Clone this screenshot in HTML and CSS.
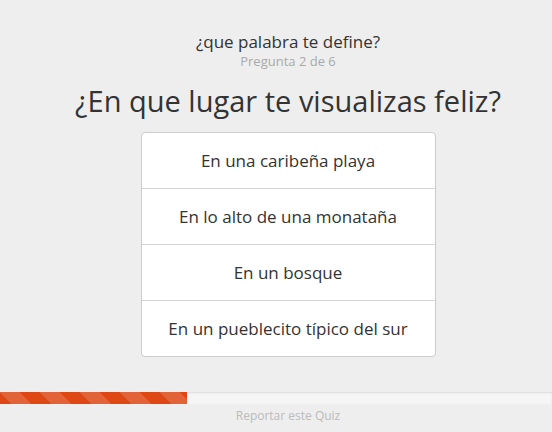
FILE: index.html
```html
<!DOCTYPE html>
<html lang="es">
<head>
<meta charset="utf-8">
<title>Quiz</title>
<link rel="stylesheet" href="styles.css">
</head>
<body>
<div class="page">
  <main class="quiz">
    <header class="quiz-head">
      <div class="quiz-title">¿que palabra te define?</div>
      <div class="quiz-step">Pregunta 2 de 6</div>
    </header>
    <h1 class="question">¿En que lugar te visualizas feliz?</h1>
    <ul class="answers">
      <li class="answer">En una caribeña playa</li>
      <li class="answer">En lo alto de una monataña</li>
      <li class="answer">En un bosque</li>
      <li class="answer">En un pueblecito típico del sur</li>
    </ul>
  </main>
  <footer class="quiz-foot">
    <div class="progress"><div class="progress-bar" style="width: 33.9%"></div></div>
    <div class="report">Reportar este Quiz</div>
  </footer>
</div>
</body>
</html>
```
FILE: styles.css
```css
html, body {
  margin: 0;
  padding: 0;
  height: 100%;
}
body {
  background: #eeeeee;
  font-family: "Open Sans", "Noto Sans", sans-serif;
  color: #333333;
}
.page {
  height: 100%;
  display: flex;
  flex-direction: column;
}
.quiz {
  flex: 1;
  display: flex;
  flex-direction: column;
  align-items: center;
  padding-top: 31px;
  padding-left: 24px;
}
.quiz-head {
  text-align: center;
}
.quiz-title {
  font-size: 17px;
  line-height: 22px;
  color: #333;
}
.quiz-step {
  font-size: 13px;
  line-height: 16px;
  color: #aaaaaa;
}
.question {
  margin: 13px 0 0;
  font-size: 29px;
  line-height: 38px;
  font-weight: normal;
  color: #333;
}
.answers {
  list-style: none;
  margin: 12px 0 0;
  padding: 0;
  width: 293px;
  background: #fff;
  border: 1px solid #cccccc;
  border-radius: 4px;
}
.answer {
  height: 55px;
  display: flex;
  align-items: center;
  justify-content: center;
  font-size: 17px;
  color: #333;
  border-top: 1px solid #d4d4d4;
}
.answer:first-child {
  border-top: none;
}
.quiz-foot {
  height: 40px;
}
.progress {
  height: 12px;
  background: #f5f5f5;
  box-shadow: inset 0 1px 2px rgba(0,0,0,.1);
  overflow: hidden;
}
.progress-bar {
  height: 100%;
  background-color: #dd4814;
  background-image: linear-gradient(45deg, rgba(255,255,255,.15) 25%, transparent 25%, transparent 50%, rgba(255,255,255,.15) 50%, rgba(255,255,255,.15) 75%, transparent 75%, transparent);
  background-size: 40px 40px;
}
.report {
  text-align: center;
  font-size: 12px;
  line-height: 20px;
  padding-top: 2px;
  padding-left: 24px;
  color: #bbbbbb;
}
```
